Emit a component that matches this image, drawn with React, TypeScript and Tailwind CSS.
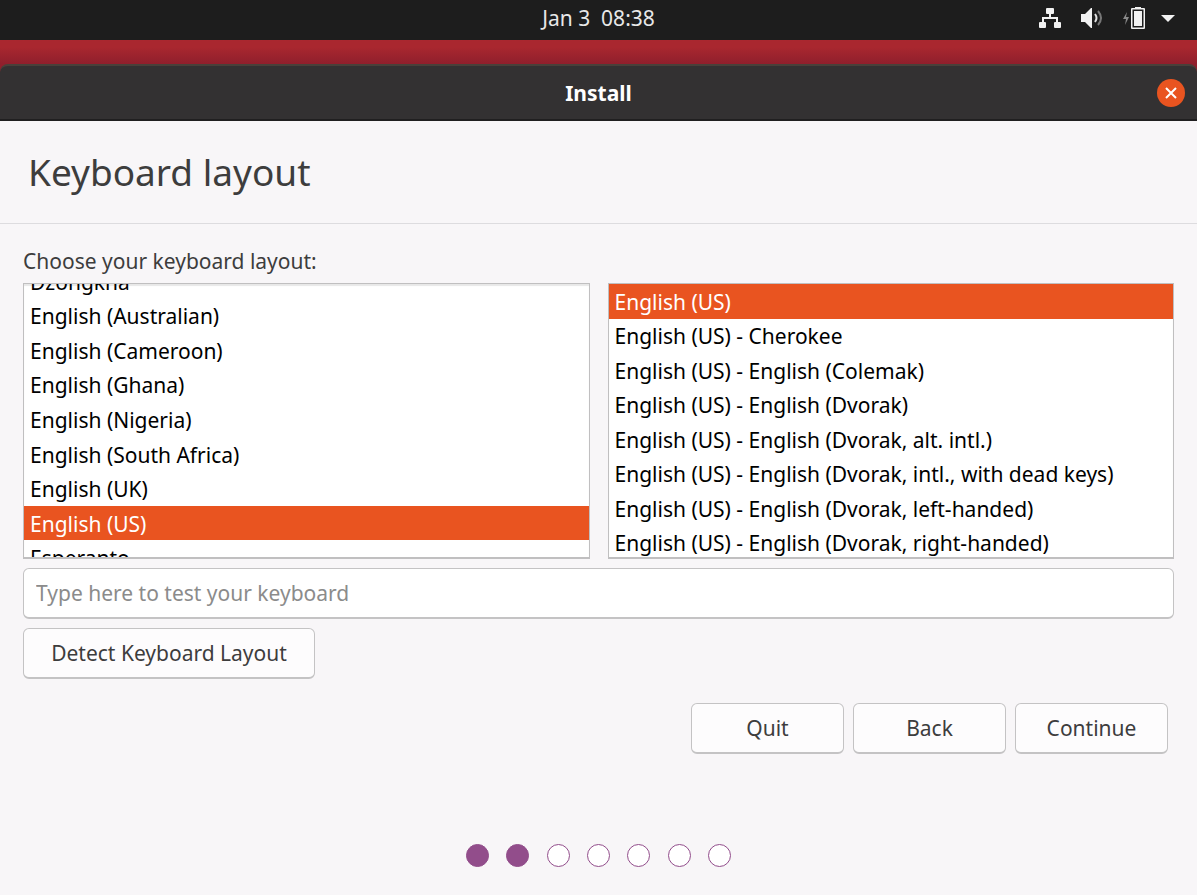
import React, { useLayoutEffect, useRef, useState } from 'react';

const LAYOUTS = [
  'Dzongkha',
  'English (Australian)',
  'English (Cameroon)',
  'English (Ghana)',
  'English (Nigeria)',
  'English (South Africa)',
  'English (UK)',
  'English (US)',
  'Esperanto',
];

const VARIANTS = [
  'English (US)',
  'English (US) - Cherokee',
  'English (US) - English (Colemak)',
  'English (US) - English (Dvorak)',
  'English (US) - English (Dvorak, alt. intl.)',
  'English (US) - English (Dvorak, intl., with dead keys)',
  'English (US) - English (Dvorak, left-handed)',
  'English (US) - English (Dvorak, right-handed)',
];

const STEPS = 7;
const CURRENT_STEP = 2;

interface ListBoxProps {
  label: string;
  items: string[];
  selected: string;
  onSelect: (item: string) => void;
  initialScroll?: number;
  gridClass: string;
}

function ListBox({ label, items, selected, onSelect, initialScroll = 0, gridClass }: ListBoxProps) {
  const boxRef = useRef<HTMLDivElement>(null);

  useLayoutEffect(() => {
    if (boxRef.current) boxRef.current.scrollTop = initialScroll;
  }, [initialScroll]);

  return (
    <div
      ref={boxRef}
      role="listbox"
      aria-label={label}
      className="h-[276px] min-w-0 flex-1 overflow-y-auto border border-b-2 border-[#c0bfc0] bg-white shadow-[inset_0_2px_1px_#e8e8e8] [scrollbar-width:none]"
    >
      <div className={`grid auto-rows-fr ${gridClass}`}>
        {items.map((item) => (
          <button
            key={item}
            type="button"
            role="option"
            aria-selected={item === selected}
            onClick={() => onSelect(item)}
            className={`flex items-center whitespace-nowrap px-1.5 pt-px text-left ${
              item === selected ? 'bg-[#e95420] text-white' : 'text-black'
            }`}
          >
            {item}
          </button>
        ))}
      </div>
    </div>
  );
}

function DialogButton({ children, className = 'w-[153px]' }: { children: React.ReactNode; className?: string }) {
  return (
    <button
      type="button"
      className={`h-[51px] rounded-md border border-b-2 border-[#c4c3c4] bg-[#fdfcfd] text-[#3d3d3d] ${className}`}
    >
      {children}
    </button>
  );
}

function NetworkIcon() {
  return (
    <svg width="22" height="20" viewBox="0 0 22 20" fill="#f2f2f2" aria-hidden="true">
      <rect x="7" y="0" width="8" height="6" rx="1" />
      <rect x="0" y="14" width="7" height="6" rx="1" />
      <rect x="15" y="14" width="7" height="6" rx="1" />
      <path d="M10 6h2v3h7v5h-2v-3H5v3H3V9h7z" />
    </svg>
  );
}

function VolumeIcon() {
  return (
    <svg width="22" height="20" viewBox="0 0 22 20" fill="none" aria-hidden="true">
      <path d="M0 6h4l6-6h1v20h-1l-6-6H0z" fill="#f2f2f2" />
      <path d="M14 6q3 4 0 8" stroke="#e0e0e0" strokeWidth="2" />
      <path d="M17 3q6 7 0 14" stroke="#777" strokeWidth="2" />
    </svg>
  );
}

function BatteryIcon() {
  return (
    <svg width="22" height="22" viewBox="0 0 22 22" aria-hidden="true">
      <path d="M4 5 0 12h3l-1 6 4-8H3z" fill="#8a8a8a" />
      <path d="M12 0h6v1h3a1 1 0 0 1 1 1v19a1 1 0 0 1-1 1H9a1 1 0 0 1-1-1V2a1 1 0 0 1 1-1h3z" fill="#f2f2f2" />
      <path d="M9.500 2.500h11v18h-11z" fill="#1d1d1d" />
      <path d="M11 4h8v15h-8z" fill="#f2f2f2" />
    </svg>
  );
}

export default function App() {
  const [layout, setLayout] = useState('English (US)');
  const [variant, setVariant] = useState('English (US)');
  const [sample, setSample] = useState('');

  return (
    <div className="flex min-h-screen flex-col bg-[#8f1f2c] font-['Noto_Sans','Open_Sans',sans-serif] text-[21px] leading-7">
      <header className="grid h-10 shrink-0 grid-cols-[1fr_auto_1fr] items-center bg-[#1d1d1d] px-[22px] pb-1 text-[#e8e8e8]">
        <time className="col-start-2 whitespace-pre">Jan 3  08:38</time>
        <div className="flex items-center justify-end gap-4">
          <div className="flex items-center gap-5">
            <NetworkIcon />
            <VolumeIcon />
            <BatteryIcon />
          </div>
          <svg width="14" height="7" viewBox="0 0 14 7" fill="#f2f2f2" aria-hidden="true">
            <path d="M0 0h14L7 7z" />
          </svg>
        </div>
      </header>

      <div className="h-6 shrink-0 bg-linear-to-b from-[#a9272f] from-30% to-[#8f1f2c]" />

      <section className="flex flex-1 flex-col">
        <div className="grid h-[57px] shrink-0 grid-cols-[1fr_auto_1fr] items-center rounded-t-lg border-t-2 border-b-2 border-t-[#49403a] border-b-[#201f20] bg-[#333132] px-3">
          <h1 className="col-start-2 font-bold text-white">Install</h1>
          <button
            type="button"
            aria-label="Close"
            className="flex size-7 items-center justify-center justify-self-end rounded-full bg-[#e95420]"
          >
            <svg width="12" height="12" viewBox="0 0 12 12" stroke="#fff" strokeWidth="2" aria-hidden="true">
              <path d="M1 1l10 10M11 1 1 11" />
            </svg>
          </button>
        </div>

        <main className="flex flex-1 flex-col bg-[#f8f6f8] text-[#3d3d3d]">
          <div className="flex h-[103px] shrink-0 items-center border-b border-[#dddcdf] px-7">
            <h2 className="text-[37px] leading-[48px]">Keyboard layout</h2>
          </div>

          <div className="flex flex-col px-[23px] pt-[23px]">
            <p className="mb-2">Choose your keyboard layout:</p>
            <div className="flex gap-[18px]">
              <ListBox
                label="Keyboard layout"
                items={LAYOUTS}
                selected={layout}
                onSelect={setLayout}
                initialScroll={20}
                gridClass="h-[311px]"
              />
              <ListBox
                label="Keyboard variant"
                items={VARIANTS}
                selected={variant}
                onSelect={setVariant}
                gridClass="h-[276px]"
              />
            </div>
            <input
              type="text"
              value={sample}
              onChange={(e) => setSample(e.target.value)}
              aria-label="Test your keyboard"
              placeholder="Type here to test your keyboard"
              className="mt-[9px] h-[51px] w-full rounded-md border border-b-2 border-[#c4c3c4] bg-white px-3 placeholder:text-[#8b8b8b]"
            />
            <DialogButton className="mt-[9px] w-[292px]">Detect Keyboard Layout</DialogButton>
            <div className="mt-6 flex justify-end gap-[9px] pr-1.5">
              <DialogButton>Quit</DialogButton>
              <DialogButton>Back</DialogButton>
              <DialogButton>Continue</DialogButton>
            </div>
          </div>

          <div className="mx-auto mt-auto flex w-[265px] justify-between pt-6 pb-7">
            {Array.from({ length: STEPS }, (_, i) => (
              <span
                key={i}
                className={`size-[23px] rounded-full border border-[#924d8b] ${
                  i < CURRENT_STEP ? 'bg-[#924d8b]' : 'bg-white'
                }`}
              />
            ))}
          </div>
        </main>
      </section>
    </div>
  );
}
